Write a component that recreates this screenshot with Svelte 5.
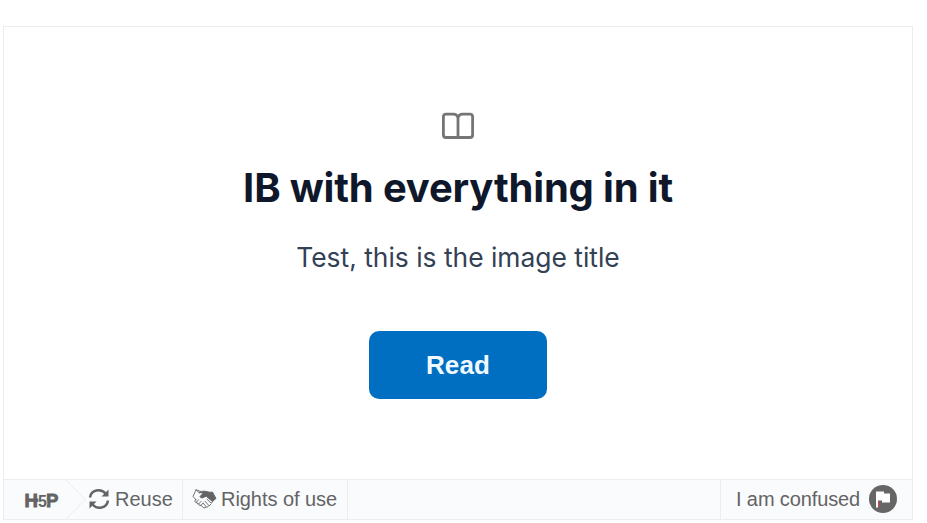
<script>
  const title = 'IB with everything in it';
  const subtitle = 'Test, this is the image title';
</script>

<main class="frame">
  <section class="cover">
    <svg class="book" width="34" height="28" viewBox="0 0 34 28" fill="none" stroke="#757575" stroke-width="2.8" stroke-linejoin="round">
      <path d="M17 5.5Q15.7 2.2 12.5 2.2H5Q2.4 2.2 2.4 4.7V23Q2.4 25.5 5 25.5H29Q31.6 25.5 31.6 23V4.7Q31.6 2.2 29 2.2H21.5Q18.3 2.2 17 5.5V25.5" />
    </svg>
    <h1>{title}</h1>
    <p>{subtitle}</p>
    <button>Read</button>
  </section>

  <footer>
    <div class="brand">
      <svg width="82" height="39" viewBox="0 0 82 39" aria-label="H5P">
        <path d="M62 0L81.5 19.5L62 39" fill="none" stroke="#ededed" />
        <g font-family="Liberation Sans, sans-serif" font-weight="bold" fill="#646464">
          <text x="20.5" y="26.8" font-size="18.5" stroke="#646464" stroke-width=".9">H</text>
          <path d="M30 18.5h5v3.5h-5z" />
          <text x="42" y="26.8" font-size="18.5" stroke="#646464" stroke-width=".9">P</text>
          <text x="34" y="27" font-size="16" stroke="#fafbfd" stroke-width="1.2" paint-order="stroke">5</text>
        </g>
      </svg>
    </div>
    <div class="item reuse">
      <svg width="22" height="22" viewBox="0 0 22 22" fill="none" stroke="#646464" stroke-width="2.4">
        <path d="M2 9.5C3 1.5 13 .2 17.5 5.5M20 12.5C19 20.5 9 21.8 4.5 16.5" />
        <path d="M20.5 1.5V8.5H13.5ZM1.5 20.5V13.5H8.5Z" fill="#646464" stroke="none" />
      </svg>
      <span>Reuse</span>
    </div>
    <div class="item rights">
      <svg width="25" height="22" viewBox="0 0 25 22" fill="none" stroke="#646464" stroke-width=".9" stroke-linejoin="round" stroke-linecap="round">
        <path d="M7.2 4.6L10.5 3.2L13.5 3.3L17.5 4.2L20.5 4.1L24 10.5L20.3 13.5L14.2 8.2L10.8 9.8Q8.5 10.5 8 8.5L11.3 4.9Z" fill="#646464" />
        <path d="M7 4.6L4 1.8L1 8.5L3.8 11.5M4 1.8L9 3.5M3.8 11.5L2.8 13.2Q3 14.8 4.7 14Q4.5 16.2 6.7 15.9Q6.8 18 9 17.4L12 20L14 19.3" />
        <path d="M4.6 14L6.5 11.8M6.7 15.9L9 13.4M9 17.4L11 15M11.4 15.4L14.6 19.3L16.3 18.4M13 13.2L17 17.8L18.7 16.5M15 11.3L19.4 15.3L20.6 13.5" />
      </svg>
      <span>Rights of use</span>
    </div>
    <div class="confused">
      <span>I am confused</span>
      <svg width="28" height="28" viewBox="0 0 28 28">
        <circle cx="14" cy="14" r="14" fill="#666" />
        <path d="M7 6.5h8v2h6v9h-8v-2H9v7H7z" fill="#fff" />
        <path d="M9 16.5h1.3v5H9z" fill="#cf4450" />
      </svg>
    </div>
  </footer>
</main>

<style>
  :global(body) { background: #fff; }
  .frame {
    box-sizing: border-box;
    width: 910px;
    height: 494px;
    margin: 26px 0 0 3px;
    border: 1px solid #ededed;
    display: flex;
    flex-direction: column;
    font-family: "Liberation Sans", Arial, sans-serif;
  }
  .cover {
    flex: 1;
    display: flex;
    flex-direction: column;
    align-items: center;
    padding-top: 85px;
  }
  .book { display: block; }
  h1, p { font-family: Inter, sans-serif; white-space: nowrap; }
  h1 {
    margin: 22px 0 0;
    font-size: 40px;
    line-height: 52px;
    font-weight: 700;
    letter-spacing: -.17px;
    color: #0f172a;
  }
  p {
    margin: 24px 0 0;
    font-size: 26.4px;
    line-height: 38px;
    color: #334155;
  }
  button {
    width: 178px;
    height: 68px;
    margin-top: 55px;
    padding: 0;
    border: 0;
    border-radius: 10px;
    background: #006fc1;
    color: #f0f9ff;
    font: bold 26px "Liberation Sans", Arial, sans-serif;
    letter-spacing: .15px;
  }
  footer {
    box-sizing: border-box;
    height: 40px;
    border-top: 1px solid #ededed;
    background: #fafbfd;
    display: flex;
    color: #646464;
    font-size: 20px;
    line-height: 39px;
    white-space: nowrap;
  }
  footer svg { display: block; flex: none; }
  .brand { width: 82px; }
  .item, .confused {
    box-sizing: border-box;
    display: flex;
    align-items: center;
  }
  .item { border-right: 1px solid #ededed; }
  .item svg, .confused svg { margin-bottom: 2px; }
  .reuse { width: 97px; padding-left: 2px; gap: 5px; }
  .rights { width: 165px; padding-left: 9px; gap: 4px; }
  .rights span { letter-spacing: -.05px; }
  .confused {
    width: 192px;
    margin-left: auto;
    border-left: 1px solid #ededed;
    padding: 0 15px;
    justify-content: space-between;
  }
  .confused span { letter-spacing: -.12px; }
</style>
